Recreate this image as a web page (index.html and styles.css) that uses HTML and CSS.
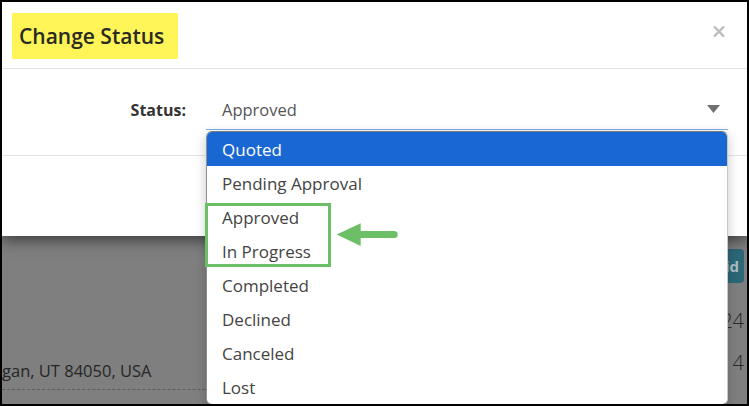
FILE: index.html
```html
<!DOCTYPE html>
<html lang="en">
<head>
<meta charset="utf-8">
<title>Change Status</title>
<link rel="stylesheet" href="styles.css">
</head>
<body>
<div class="screen">
  <div class="page">
    <div class="page-left">
      <div class="address">gan, UT 84050, USA</div>
    </div>
    <div class="page-right">
      <span class="badge">Paid</span>
      <span class="date first">24</span>
      <span class="date second">4</span>
    </div>
  </div>

  <div class="modal">
    <div class="modal-header">
      <h2 class="title">Change Status</h2>
      <svg class="close" width="12" height="11" viewBox="0 0 12 11" aria-label="Close">
        <path d="M1 0.5 L11 10.5 M11 0.5 L1 10.5" stroke="#bdbdbd" stroke-width="2.4" stroke-linecap="butt"/>
      </svg>
    </div>
    <div class="modal-body">
      <label class="field-label">Status:</label>
      <div class="select">
        <span class="select-value">Approved</span>
        <svg class="caret" width="13" height="8" viewBox="0 0 13 8">
          <path d="M0 0 H13 L6.5 8 Z" fill="#707070"/>
        </svg>
      </div>
    </div>
    <div class="modal-footer"></div>
  </div>

  <ul class="dropdown">
    <li class="option active">Quoted</li>
    <li class="option">Pending Approval</li>
    <li class="option">Approved</li>
    <li class="option">In Progress</li>
    <li class="option">Completed</li>
    <li class="option">Declined</li>
    <li class="option">Canceled</li>
    <li class="option">Lost</li>
  </ul>

  <div class="callout-box"></div>
  <svg class="callout-arrow" width="70" height="35" viewBox="0 0 70 35">
    <path d="M4.7 17.4 L28.7 6.3 L28.7 29 Z" fill="#6cbf67"/>
    <line x1="27" y1="17.6" x2="62.2" y2="17.6" stroke="#6cbf67" stroke-width="7" stroke-linecap="round"/>
  </svg>
</div>
</body>
</html>
```

FILE: styles.css
```css
* { box-sizing: border-box; }

html, body {
  margin: 0;
  padding: 0;
  background: #000;
}

body {
  width: 749px;
  height: 406px;
  overflow: hidden;
  font-family: "Open Sans", "Noto Sans", sans-serif;
}

.screen {
  position: relative;
  margin: 2px 0 0 2px;
  width: 745px;
  height: 402px;
  background: #7f7f7f;
  overflow: hidden;
}

/* background page (under overlay) */
.page {
  display: flex;
  height: 100%;
}

.page-left {
  flex: 1;
  padding-top: 358px;
}

.address {
  font-size: 16.5px;
  line-height: 22px;
  color: #262626;
  padding-bottom: 7px;
  border-bottom: 1px dashed #5e5e5e;
  white-space: nowrap;
}

.page-right {
  width: 60px;
  display: flex;
  flex-direction: column;
  align-items: flex-end;
  padding-right: 3px;
}

.badge {
  margin-top: 247px;
  height: 34px;
  padding: 0 5px 0 10px;
  line-height: 34px;
  border-radius: 4px;
  background: #2b6878;
  color: #aebfc4;
  font-weight: 700;
  font-size: 15px;
}

.date {
  font-size: 20px;
  line-height: 24px;
  color: #2a2a2a;
  font-weight: 300;
}

.date.first { margin-top: 26px; }
.date.second { margin-top: 18px; }

/* modal */
.modal {
  position: absolute;
  left: 0;
  top: 0;
  width: 745px;
  height: 234px;
  background: #fff;
  box-shadow: 0 4px 14px rgba(0, 0, 0, 0.55);
}

.modal-header {
  height: 67px;
  border-bottom: 1px solid #e5e5e5;
  display: flex;
  justify-content: space-between;
  align-items: flex-start;
  padding: 11px 22px 0 10px;
}

.title {
  margin: 0;
  width: 166px;
  height: 46px;
  padding-left: 7px;
  background: #fff559;
  font-size: 21px;
  font-weight: 600;
  line-height: 46px;
  color: #2a2a22;
  white-space: nowrap;
}

.close {
  margin-top: 13px;
}

.modal-body {
  height: 87px;
  border-bottom: 1px solid #e5e5e5;
  display: flex;
  align-items: flex-start;
  padding-top: 30px;
}

.field-label {
  width: 184px;
  text-align: right;
  font-weight: 700;
  font-size: 16px;
  line-height: 22px;
  color: #333;
  margin-right: 20px;
}

.select {
  width: 522px;
  display: flex;
  justify-content: space-between;
  align-items: flex-start;
  padding: 0 8px 8px 16px;
  border-bottom: 1px solid #7fb0e6;
}

.select-value {
  font-size: 16.5px;
  line-height: 22px;
  color: #555;
}

.caret {
  margin-top: 6px;
}

.modal-footer {
  height: 80px;
}

/* dropdown menu */
.dropdown {
  position: absolute;
  left: 204px;
  top: 129px;
  width: 522px;
  margin: 0;
  padding: 0;
  list-style: none;
  background: #fff;
  border: 1px solid #8f8f8f;
  border-top-color: #7a7a7a;
  border-right-color: #c8c8c8;
  border-radius: 6px;
  overflow: hidden;
  box-shadow: 0 3px 12px rgba(0, 0, 0, 0.22);
}

.option {
  height: 34px;
  padding: 2px 0 0 15px;
  font-size: 17px;
  line-height: 32px;
  color: #444;
}

.option.active {
  background: #1967d2;
  color: #fff;
}

/* annotation */
.callout-box {
  position: absolute;
  left: 203px;
  top: 201px;
  width: 126px;
  height: 64px;
  border: 3px solid #6cbf67;
}

.callout-arrow {
  position: absolute;
  left: 330px;
  top: 215px;
}
```
